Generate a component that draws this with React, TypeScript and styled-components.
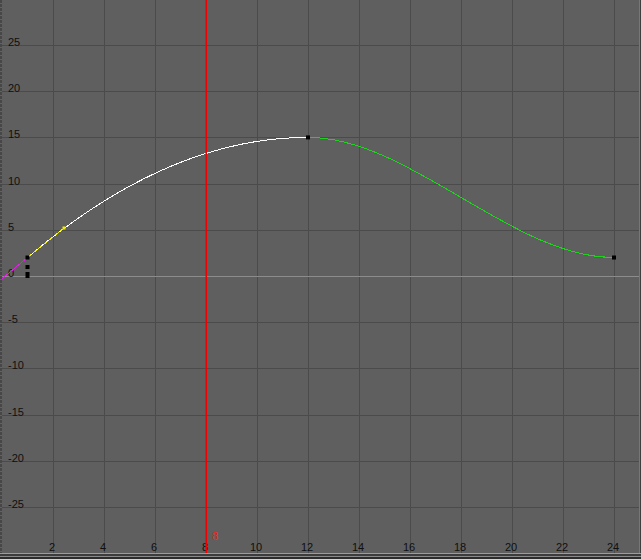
import React from "react";
import styled, { createGlobalStyle } from "styled-components";

const GlobalStyle = createGlobalStyle`
  html, body {
    margin: 0;
    padding: 0;
    background: #5f5f5f;
  }
`;

// graph scale (page coords): frame 0 at x=2, value 0 at y=276
const FRAME_PX = 25.5;
const VALUE_PX = 9.24;
const ZERO_Y = 276;
const PLOT_W = 637;
const PLOT_H = 553;

const fx = (f: number) => f * FRAME_PX;
const vy = (v: number) => ZERO_Y - v * VALUE_PX;

const Styles = {
  Editor: styled.div`
    width: 641px;
    height: 559px;
    display: flex;
    background: #5f5f5f;
    overflow: hidden;
    font-family: "Liberation Sans", "DejaVu Sans", sans-serif;
  `,
  LeftRuler: styled.div`
    width: 2px;
    height: 553px;
    background: repeating-linear-gradient(
      to bottom,
      #474747 0px,
      #474747 3px,
      #626262 3px,
      #626262 4px
    );
  `,
  Plot: styled.div`
    flex: 1;
    display: flex;
    flex-direction: column;
  `,
  Canvas: styled.svg`
    display: block;
    width: ${PLOT_W}px;
    height: ${PLOT_H}px;
  `,
  BottomFrame: styled.div`
    height: 6px;
    margin-left: -2px;
    margin-right: -2px;
    background: linear-gradient(
      to bottom,
      #9c9c9c 0px,
      #9c9c9c 1px,
      #3c3c3c 1px,
      #3c3c3c 3px,
      #8a8a8a 3px,
      #8a8a8a 4px,
      #2c2c2c 4px
    );
  `,
  RightEdge: styled.div`
    width: 2px;
    height: 553px;
    background: #3f3f3f;
    border-left: 1px solid #777;
    box-sizing: border-box;
  `,
};

const frameTicks = [2, 4, 6, 8, 10, 12, 14, 16, 18, 20, 22, 24];
const valueTicks = [25, 20, 15, 10, 5, 0, -5, -10, -15, -20, -25];

// hermite -> bezier
const key1 = { x: fx(1), y: vy(2) };
const key2 = { x: fx(12), y: vy(15) };
const key3 = { x: fx(24), y: vy(2) };
const outSlope = 2.35;
const seg1 = `M ${key1.x} ${key1.y} C ${key1.x + fx(11 / 3)} ${
  key1.y - (11 / 3) * outSlope * VALUE_PX
}, ${key2.x - fx(11 / 3)} ${key2.y}, ${key2.x} ${key2.y}`;
const seg2 = `M ${key2.x} ${key2.y} C ${key2.x + fx(4)} ${key2.y}, ${
  key3.x - fx(4)
} ${key3.y}, ${key3.x} ${key3.y}`;

const handleEnd = { x: 62, y: 228 };
const inStart = { x: 0, y: key1.y + key1.x * (30 / 36) };

const Key = ({ x, y, color = "#000" }: { x: number; y: number; color?: string }) => (
  <rect x={x - 2} y={y - 2} width={4} height={4} fill={color} />
);

export default function App() {
  return (
    <>
      <GlobalStyle />
      <Styles.Editor>
        <Styles.LeftRuler />
        <Styles.Plot>
          <Styles.Canvas viewBox={`0 0 ${PLOT_W} ${PLOT_H}`}>
            <g stroke="#4b4b4b" strokeWidth={1} shapeRendering="crispEdges">
              {frameTicks.map((f) => (
                <line key={f} x1={fx(f)} y1={0} x2={fx(f)} y2={PLOT_H} />
              ))}
              {valueTicks
                .filter((v) => v !== 0)
                .map((v) => (
                  <line key={v} x1={0} y1={Math.round(vy(v))} x2={PLOT_W} y2={Math.round(vy(v))} />
                ))}
            </g>
            <line
              x1={0}
              y1={ZERO_Y}
              x2={PLOT_W}
              y2={ZERO_Y}
              stroke="#8c8c8c"
              shapeRendering="crispEdges"
            />

            <g fontSize={11} fill="#101010" fontFamily="Liberation Sans, DejaVu Sans, sans-serif">
              {valueTicks.map((v) => (
                <text key={v} x={6} y={Math.round(vy(v)) + 1}>
                  {v}
                </text>
              ))}
              {frameTicks.map((f) => (
                <text key={f} x={fx(f) - 1} y={551} textAnchor="middle">
                  {f}
                </text>
              ))}
            </g>

            <g fill="none" strokeWidth={1} shapeRendering="crispEdges">
              <line
                x1={inStart.x}
                y1={inStart.y}
                x2={key1.x}
                y2={key1.y}
                stroke="#e61ee6"
              />
              <path d={seg1} stroke="#ffffff" />
              <path d={seg2} stroke="#1ed21e" />
              <line
                x1={key1.x}
                y1={key1.y}
                x2={handleEnd.x}
                y2={handleEnd.y}
                stroke="#f0f000"
                strokeDasharray="5 2"
              />
            </g>

            <rect x={handleEnd.x - 1.5} y={handleEnd.y - 1.5} width={3} height={3} fill="#f0f000" />
            <Key x={key1.x} y={key1.y} />
            <Key x={key1.x} y={267} />
            <rect x={key1.x - 2} y={272} width={4} height={6} fill="#000" />
            <Key x={key2.x} y={key2.y} />
            <Key x={key3.x} y={key3.y} />

            <rect x={fx(8) - 0.5} y={0} width={1.6} height={PLOT_H} fill="#f00000" />
            <text x={fx(8) + 6} y={540} fontSize={11} fill="#ff2020" fontFamily="Liberation Sans, sans-serif">
              8
            </text>
          </Styles.Canvas>
          <Styles.BottomFrame />
        </Styles.Plot>
        <Styles.RightEdge />
      </Styles.Editor>
    </>
  );
}
